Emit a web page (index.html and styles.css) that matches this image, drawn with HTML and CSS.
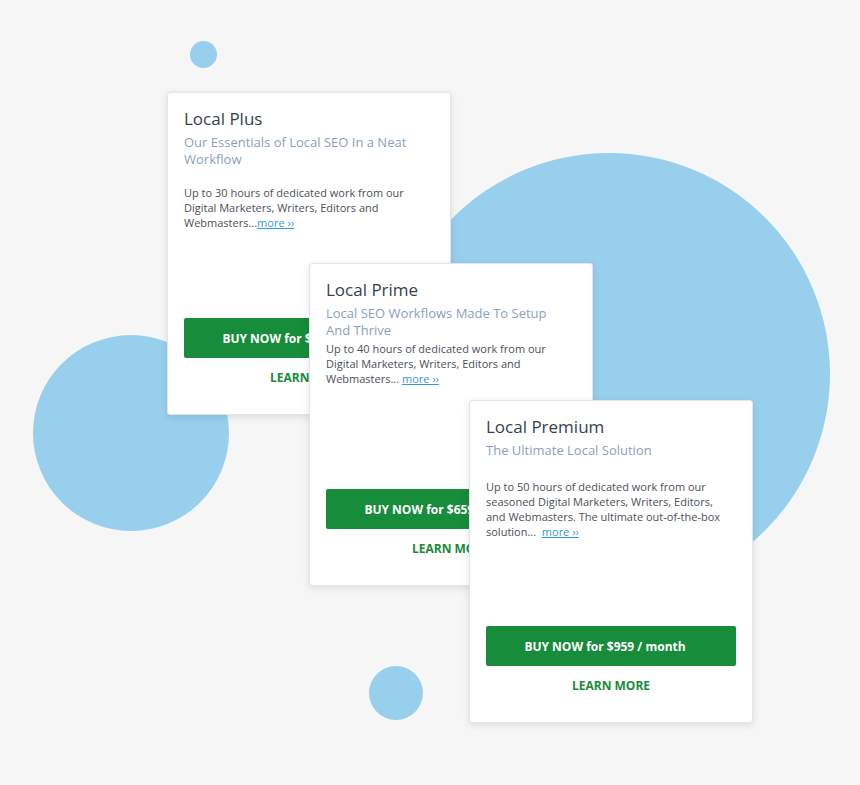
FILE: index.html
```html
<!DOCTYPE html>
<html lang="en">
<head>
    <meta charset="UTF-8">
    <meta name="viewport" content="width=device-width, initial-scale=1.0">
    <title>Local SEO Plans</title>
    <link rel="stylesheet" href="styles.css">
</head>
<body>
    <div class="stage">
        <div class="dot dot-top"></div>
        <div class="dot dot-big"></div>
        <div class="dot dot-left"></div>
        <div class="dot dot-bottom"></div>

        <div class="card card-plus">
            <h2 class="card-title">Local Plus</h2>
            <p class="card-sub">Our Essentials of Local SEO In a Neat Workflow</p>
            <p class="card-text gap-lg">Up to 30 hours of dedicated work from our Digital Marketers, Writers, Editors and Webmasters...<a href="#" class="more">more ››</a></p>
            <button class="buy">BUY NOW for $359 / month</button>
            <a href="#" class="learn">LEARN MORE</a>
        </div>

        <div class="card card-prime">
            <h2 class="card-title">Local Prime</h2>
            <p class="card-sub">Local SEO Workflows Made To Setup And Thrive</p>
            <p class="card-text gap-sm">Up to 40 hours of dedicated work from our Digital Marketers, Writers, Editors and Webmasters... <a href="#" class="more">more ››</a></p>
            <button class="buy">BUY NOW for $659 / month</button>
            <a href="#" class="learn">LEARN MORE</a>
        </div>

        <div class="card card-premium">
            <h2 class="card-title">Local Premium</h2>
            <p class="card-sub">The Ultimate Local Solution</p>
            <p class="card-text gap-xl">Up to 50 hours of dedicated work from our seasoned Digital Marketers, Writers, Editors, and Webmasters. The ultimate out-of-the-box solution...&nbsp; <a href="#" class="more">more ››</a></p>
            <button class="buy">BUY NOW for $959 / month</button>
            <a href="#" class="learn">LEARN MORE</a>
        </div>
    </div>
</body>
</html>
```

FILE: styles.css
```css
body {
    margin: 0;
    font-family: "Open Sans", "Noto Sans", sans-serif;
    background: #f6f6f6;
}

.stage {
    position: relative;
    width: 860px;
    height: 785px;
    overflow: hidden;
}

/* decorative circles */
.dot {
    position: absolute;
    border-radius: 50%;
    background: #98cfed;
}

.dot-top {
    left: 190px;
    top: 41px;
    width: 27px;
    height: 27px;
}

.dot-big {
    left: 388px;
    top: 153px;
    width: 442px;
    height: 442px;
}

.dot-left {
    left: 33px;
    top: 335px;
    width: 196px;
    height: 196px;
}

.dot-bottom {
    left: 369px;
    top: 666px;
    width: 54px;
    height: 54px;
}

/* plan cards */
.card {
    position: absolute;
    box-sizing: border-box;
    width: 284px;
    height: 323px;
    padding: 14px 16px 28px;
    display: flex;
    flex-direction: column;
    background: #fff;
    border: 1px solid #e2e5ea;
    border-radius: 3px;
    box-shadow: 0 2px 7px rgba(40, 50, 70, 0.13);
}

.card-plus {
    left: 167px;
    top: 92px;
}

.card-prime {
    left: 309px;
    top: 263px;
}

.card-premium {
    left: 469px;
    top: 400px;
}

.card-title {
    margin: 0;
    font-size: 17px;
    line-height: 24px;
    font-weight: 500;
    color: #383f4c;
}

.card-sub {
    margin: 3px 12px 0 0;
    font-size: 13px;
    line-height: 17px;
    color: #8b9fbb;
}

.card-text {
    margin: 0 10px 0 0;
    font-size: 11px;
    line-height: 15px;
    color: #4b5058;
}

.gap-sm { margin-top: 2px; }
.gap-lg { margin-top: 17px; }
.gap-xl { margin-top: 20px; }

.more {
    color: #2f9ae0;
    text-decoration: underline;
}

.buy {
    margin-top: auto;
    height: 40px;
    padding: 0 12px 0 0;
    border: none;
    border-radius: 2px;
    background: #178c3a;
    color: #fff;
    font-family: inherit;
    font-size: 12px;
    font-weight: 700;
    cursor: pointer;
    white-space: nowrap;
    overflow: hidden;
}

.learn {
    margin-top: 12px;
    font-size: 12px;
    line-height: 16px;
    font-weight: 700;
    text-align: center;
    color: #1a8a3c;
    text-decoration: none;
}
```
